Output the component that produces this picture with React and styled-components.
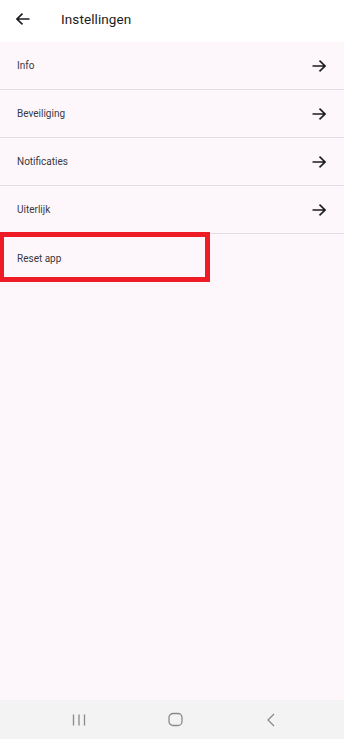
import React from 'react'
import styled, { createGlobalStyle } from 'styled-components'

const GlobalStyle = createGlobalStyle`
  html, body {
    margin: 0;
    padding: 0;
    height: 100%;
  }
  body {
    font-family: Roboto, "Noto Sans", sans-serif;
    color: #1d1b20;
    background: #fdf7fc;
  }
  #root {
    height: 100%;
  }
`

const Screen = styled.div`
  display: flex;
  flex-direction: column;
  width: 344px;
  height: 739px;
  overflow: hidden;
`

const AppBar = styled.header`
  display: flex;
  align-items: center;
  height: 42px;
  padding: 0 14px 5px 16px;
  background: #ffffff;
  box-sizing: border-box;
`

const IconButton = styled.button`
  display: flex;
  align-items: center;
  justify-content: center;
  width: 14px;
  height: 14px;
  padding: 0;
  border: 0;
  background: none;
`

const Title = styled.h1`
  margin: 0 0 0 31px;
  font-size: 13.5px;
  font-weight: 400;
  letter-spacing: 0.1px;
  color: #1d1b20;
`

const List = styled.div`
  flex: 1;
  display: flex;
  flex-direction: column;
  background: #fdf7fc;
`

const Row = styled.div`
  position: relative;
  display: flex;
  align-items: center;
  justify-content: space-between;
  height: 48px;
  padding: 0 18px 0 17px;
  box-sizing: border-box;
  border-bottom: ${p => (p.$last ? 'none' : '1px solid #e2dde2')};
  font-size: 10px;
  color: #3a373d;
`

const Highlight = styled.div`
  position: absolute;
  left: -1px;
  top: -2px;
  width: 211px;
  height: 50px;
  border: 5px solid #ee1c25;
  box-sizing: border-box;
`

const NavBar = styled.nav`
  display: flex;
  align-items: center;
  justify-content: center;
  gap: 80px;
  height: 39px;
  padding-left: 6px;
  background: #f3f3f3;
`

const NavSlot = styled.div`
  display: flex;
  align-items: center;
  justify-content: center;
  width: 16px;
  height: 16px;
`

const Arrow = ({ back }) => (
  <svg width="14" height="12" viewBox="0 0 14 12">
    <path
      d={back ? 'M13.5 6H1M6.5 0.7L1 6l5.5 5.3' : 'M0.5 6H13M7.5 0.7L13 6l-5.5 5.3'}
      stroke="#1d1b20"
      strokeWidth="1.6"
      fill="none"
    />
  </svg>
)

const items = [
  { label: 'Info', arrow: true },
  { label: 'Beveiliging', arrow: true },
  { label: 'Notificaties', arrow: true },
  { label: 'Uiterlijk', arrow: true },
  { label: 'Reset app', arrow: false, highlight: true },
]

export default function App() {
  return (
    <>
      <GlobalStyle />
      <Screen>
        <AppBar>
          <IconButton aria-label="Terug">
            <Arrow back />
          </IconButton>
          <Title>Instellingen</Title>
        </AppBar>
        <List>
          {items.map((item, i) => (
            <Row key={item.label} $last={i === items.length - 1}>
              <span>{item.label}</span>
              {item.arrow && <Arrow />}
              {item.highlight && <Highlight />}
            </Row>
          ))}
        </List>
        <NavBar>
          <NavSlot>
            <svg width="14" height="14" viewBox="0 0 14 14">
              <path d="M1.5 1.5v11M7 1.5v11M12.5 1.5v11" stroke="#8a8a8a" strokeWidth="1.3" fill="none" />
            </svg>
          </NavSlot>
          <NavSlot>
            <svg width="15" height="15" viewBox="0 0 15 15">
              <rect x="1" y="1.5" width="13" height="12" rx="4" stroke="#8a8a8a" strokeWidth="1.3" fill="none" />
            </svg>
          </NavSlot>
          <NavSlot>
            <svg width="14" height="14" viewBox="0 0 14 14">
              <path d="M10 1L4 7l6 6" stroke="#8a8a8a" strokeWidth="1.3" fill="none" />
            </svg>
          </NavSlot>
        </NavBar>
      </Screen>
    </>
  )
}
